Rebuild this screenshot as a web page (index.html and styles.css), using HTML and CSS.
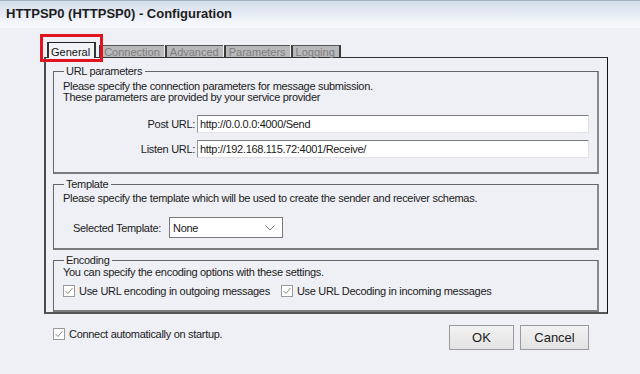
FILE: index.html
```html
<!DOCTYPE html>
<html>
<head>
<meta charset="utf-8">
<link rel="stylesheet" href="styles.css">
</head>
<body>
<div class="titlebar">HTTPSP0 (HTTPSP0) - Configuration</div>
<div class="main">
  <div class="tabs">
    <div class="tab active">General</div>
    <div class="tab">Connection</div>
    <div class="tab">Advanced</div>
    <div class="tab">Parameters</div>
    <div class="tab last">Logging</div>
    <div class="highlight"></div>
  </div>
  <div class="panel">
    <fieldset class="group g-url">
      <legend>URL parameters</legend>
      <p class="desc">Please specify the connection parameters for message submission.<br>These parameters are provided by your service provider</p>
      <div class="row first">
        <label class="lbl">Post URL:</label>
        <div class="input">http://0.0.0.0:4000/Send</div>
      </div>
      <div class="row">
        <label class="lbl">Listen URL:</label>
        <div class="input">http://192.168.115.72:4001/Receive/</div>
      </div>
    </fieldset>
    <fieldset class="group g-tpl">
      <legend>Template</legend>
      <p class="desc">Please specify the template which will be used to create the sender and receiver schemas.</p>
      <div class="tplrow">
        <label class="tlbl">Selected Template:</label>
        <div class="combo"><span>None</span>
          <svg class="chev" width="10" height="6" viewBox="0 0 10 6"><path d="M0.5 0.5 L5 5 L9.5 0.5" fill="none" stroke="#7a7a7a" stroke-width="1"/></svg>
        </div>
      </div>
    </fieldset>
    <fieldset class="group g-enc">
      <legend>Encoding</legend>
      <p class="desc">You can specify the encoding options with these settings.</p>
      <div class="checks">
        <label class="check"><span class="box"><svg width="10" height="10" viewBox="0 0 10 10"><path d="M1.5 5 L4 7.5 L8.5 2" fill="none" stroke="#8a8a8a" stroke-width="1"/></svg></span>Use URL encoding in outgoing messages</label>
        <label class="check"><span class="box"><svg width="10" height="10" viewBox="0 0 10 10"><path d="M1.5 5 L4 7.5 L8.5 2" fill="none" stroke="#8a8a8a" stroke-width="1"/></svg></span>Use URL Decoding in incoming messages</label>
      </div>
    </fieldset>
  </div>
  <div class="footer">
    <label class="check"><span class="box"><svg width="10" height="10" viewBox="0 0 10 10"><path d="M1.5 5 L4 7.5 L8.5 2" fill="none" stroke="#8a8a8a" stroke-width="1"/></svg></span>Connect automatically on startup.</label>
    <div class="buttons">
      <button class="btn ok">OK</button>
      <button class="btn cancel">Cancel</button>
    </div>
  </div>
</div>
</body>
</html>
```
FILE: styles.css
```css
html, body {
  margin: 0;
  padding: 0;
}
body {
  width: 640px;
  height: 374px;
  background: #eff0f5;
  font-family: "Liberation Sans", Arial, sans-serif;
  font-size: 11px;
  letter-spacing: -0.3px;
  color: #1a1a1a;
  overflow: hidden;
}
.titlebar {
  height: 28px;
  box-sizing: border-box;
  border-top: 1px solid #a3b3c6;
  background: linear-gradient(to bottom, #d3ddea 0%, #e2e8f2 35%, #f4f6fa 80%, #f7f8fb 100%);
  padding-left: 6px;
  font-weight: bold;
  font-size: 13px;
  letter-spacing: 0;
  line-height: 26px;
  color: #1c1c1c;
}
.main {
  padding: 14px 32px 0 44px;
}
.tabs {
  position: relative;
  display: flex;
  align-items: flex-end;
  height: 15px;
  padding-left: 3px;
  letter-spacing: 0;
}
.tab {
  height: 12px;
  box-sizing: border-box;
  background: #b9b9bb;
  border-top: 1px solid #555;
  border-left: 2px solid #3c3c3c;
  margin-left: 1px;
  color: #7d7d7d;
  line-height: 12px;
  padding: 0 4px 0 3px;
  font-size: 11px;
}
.tab.last {
  border-right: 2px solid #3c3c3c;
}
.tab.active {
  height: 16px;
  margin-bottom: -1px;
  background: #f2f3f7;
  color: #111;
  border-top: 1px solid #222;
  border-left: 2px solid #333;
  border-right: 2px solid #333;
  margin-left: 0;
  margin-right: 2px;
  padding: 2px 4px 0 2px;
  line-height: 14px;
  position: relative;
  z-index: 2;
}
.highlight {
  position: absolute;
  left: -4px;
  top: -8px;
  width: 63px;
  height: 28px;
  box-sizing: border-box;
  border: 3px solid #e0141e;
  z-index: 3;
}
.panel {
  height: 257px;
  box-sizing: border-box;
  border-top: 1px solid #333;
  border-left: 2px solid #4a4a4a;
  border-right: 1px solid #111;
  border-bottom: 2px solid #555;
  padding: 7px 8px 0 7px;
  display: flex;
  flex-direction: column;
  gap: 4px;
}
.group {
  margin: 0;
  box-sizing: border-box;
  border: 1px solid #666;
  border-right: 2px solid #8a8a8a;
  border-bottom: 2px solid #7a7a7a;
  padding: 0 8px 0 9px;
  min-width: 0;
}
.group legend {
  padding: 0 3px 0 2px;
  margin-left: 1px;
  line-height: 13px;
  font-size: 11px;
  color: #1a1a1a;
}
.g-url { height: 109px; }
.g-tpl { height: 72px; }
.g-enc { height: 58px; }
.desc {
  margin: 0;
  line-height: 11px;
}
.g-url .desc { padding-top: 3px; }
.g-tpl .desc { padding-top: 2px; }
.g-enc .desc { padding-top: 0; }
.row {
  display: flex;
  align-items: center;
  margin-top: 7px;
}
.row.first { margin-top: 12px; }
.lbl {
  width: 132px;
  text-align: right;
  padding-right: 2px;
}
.input {
  flex: 1;
  height: 18px;
  box-sizing: border-box;
  background: #fff;
  border-top: 1px solid #7c7c7c;
  border-left: 1px solid #9a9a9a;
  border-right: 1px solid #e2e2e2;
  border-bottom: 1px solid #e2e2e2;
  padding-left: 2px;
  line-height: 16px;
}
.tplrow {
  display: flex;
  align-items: center;
  margin-top: 13px;
  padding-left: 10px;
}
.tlbl {
  width: 96px;
}
.combo {
  width: 114px;
  height: 21px;
  box-sizing: border-box;
  background: #fff;
  border: 1px solid #7a7a7a;
  display: flex;
  align-items: center;
  justify-content: space-between;
  padding: 0 7px 0 3px;
  font-size: 11px;
}
.checks {
  display: flex;
  gap: 11px;
  margin-top: 7px;
}
.check {
  display: flex;
  align-items: center;
  gap: 4px;
}
.box {
  width: 12px;
  height: 12px;
  box-sizing: border-box;
  border: 1px solid #9a9a9a;
  background: #fff;
  display: flex;
  align-items: center;
  justify-content: center;
}
.footer {
  display: flex;
  justify-content: space-between;
  align-items: flex-start;
  padding: 11px 19px 0 9px;
}
.footer .check {
  margin-top: 3px;
}
.buttons {
  display: flex;
  gap: 6px;
}
.btn {
  height: 25px;
  box-sizing: border-box;
  border: 1px solid #9a9a9a;
  background: linear-gradient(to bottom, #f2f2f2, #e3e3e3);
  font-family: "Liberation Sans", Arial, sans-serif;
  font-size: 13px;
  color: #1a1a1a;
  padding: 0;
}
.btn.ok { width: 65px; }
.btn.cancel { width: 69px; }
```
